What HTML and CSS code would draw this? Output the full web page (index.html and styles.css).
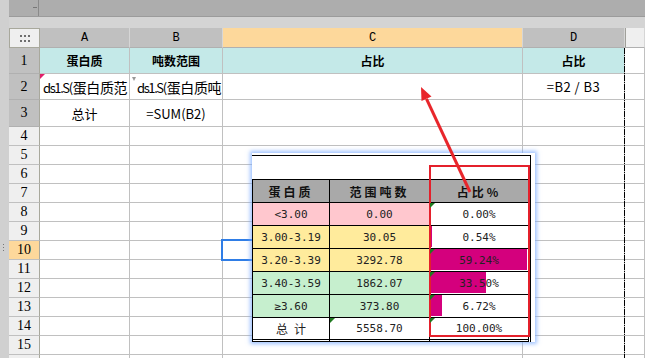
FILE: index.html
```html
<!DOCTYPE html>
<html lang="zh">
<head>
  <meta charset="UTF-8">
  <title>蛋白质占比报表</title>
  <link rel="stylesheet" href="styles.css">
</head>
<body>
  <div class="app">
    <div class="strip">
      <svg class="grip" width="2" height="9" viewBox="0 0 2 9"><rect y="0" width="1" height="1"/><rect y="3" width="1" height="1"/><rect y="6" width="1" height="1"/></svg>
    </div>
    <div class="main">
      <div class="topbar"><div class="namebox"></div></div>
      <div class="toolstrip"></div>
      <div class="sheet">
        <div class="corner">
          <svg width="10" height="7" viewBox="0 0 10 7"><rect x="0" y="0" width="2" height="2"/><rect x="4" y="0" width="2" height="2"/><rect x="8" y="0" width="2" height="2"/><rect x="0" y="5" width="2" height="2"/><rect x="4" y="5" width="2" height="2"/><rect x="8" y="5" width="2" height="2"/></svg>
        </div>
        <div class="ch">A</div><div class="ch">B</div><div class="ch on">C</div><div class="ch">D</div><div class="ch blank"></div>

        <div class="rn dark">1</div><div class="title">蛋白质</div><div class="title">吨数范围</div><div class="title">占比</div><div class="title">占比</div><div></div>
        <div class="rn dark">2</div>
        <div class="wrap flag"><span class="lat">ds1.S(</span>蛋白质范围)</div>
        <div class="wrap mark"><span class="lat">ds1.S(</span>蛋白质吨数)</div>
        <div></div><div class="formula">=B2 / B3</div><div></div>
        <div class="rn dark">3</div><div class="plain">总计</div><div class="plain">=SUM(B2)</div><div></div><div></div><div></div>

        <div class="rn">4</div><div></div><div></div><div></div><div></div><div></div>
        <div class="rn">5</div><div></div><div></div><div></div><div></div><div></div>
        <div class="rn">6</div><div></div><div></div><div></div><div></div><div></div>
        <div class="rn">7</div><div></div><div></div><div></div><div></div><div></div>
        <div class="rn">8</div><div></div><div></div><div></div><div></div><div></div>
        <div class="rn">9</div><div></div><div></div><div></div><div></div><div></div>
        <div class="rn on">10</div><div></div><div></div><div></div><div></div><div></div>
        <div class="rn">11</div><div></div><div></div><div></div><div></div><div></div>
        <div class="rn">12</div><div></div><div></div><div></div><div></div><div></div>
        <div class="rn">13</div><div></div><div></div><div></div><div></div><div></div>
        <div class="rn">14</div><div></div><div></div><div></div><div></div><div></div>
        <div class="rn">15</div><div></div><div></div><div></div><div></div><div></div>
        <div class="rn">16</div><div></div><div></div><div></div><div></div><div></div>
      </div>
    </div>

    <div class="pagebreak"></div>
    <div class="select"></div>

    <div class="float">
      <div class="frame">
        <div class="report">
          <div class="th">蛋白质</div><div class="th">范围吨数</div><div class="th">占比%</div>

          <div class="pink">&lt;3.00</div><div class="pink">0.00</div>
          <div class="pct tri"><span>0.00%</span></div>

          <div class="yellow">3.00-3.19</div><div class="yellow">30.05</div>
          <div class="pct"><i class="bar" style="width:1px"></i><span>0.54%</span></div>

          <div class="yellow">3.20-3.39</div><div class="yellow">3292.78</div>
          <div class="pct tri"><i class="bar" style="width:96px"></i><span>59.24%</span></div>

          <div class="green">3.40-3.59</div><div class="green">1862.07</div>
          <div class="pct tri"><i class="bar" style="width:55px"></i><span>33.50%</span></div>

          <div class="green">≥3.60</div><div class="green">373.80</div>
          <div class="pct tri"><i class="bar" style="width:11px"></i><span>6.72%</span></div>

          <div class="total sum">总计</div><div class="total tri">5558.70</div>
          <div class="total pct tri"><span>100.00%</span></div>
        </div>
      </div>
      <div class="redbox"></div>
    </div>

    <svg class="arrow" width="645" height="358" viewBox="0 0 645 358">
      <line x1="470" y1="192" x2="426.5" y2="98.8" stroke="#e8262b" stroke-width="3"/>
      <polygon points="421,87 431.5,96.5 421.5,101.1" fill="#e8262b"/>
    </svg>
  </div>
</body>
</html>
```

FILE: styles.css
```css
body {
  margin: 0;
  width: 645px; height: 358px;
  overflow: hidden;
  background: #fff;
  font-family: "Noto Sans CJK SC", sans-serif;
  color: #000;
}
.app { position: relative; display: flex; height: 358px; overflow: hidden; }

/* left gutter */
.strip {
  width: 9px; flex: none;
  background: #d0d0d0;
  display: flex; flex-direction: column; align-items: center;
  padding-top: 244px; box-sizing: border-box;
}
.grip { fill: #777; margin-left: -1px; }

.main { flex: 1; display: flex; flex-direction: column; min-width: 0; }
.topbar {
  flex: none;
  height: 17px; box-sizing: border-box;
  background: #adadad; border-bottom: 1px solid #9b9b9b;
  display: flex;
}
.namebox {
  width: 30px; box-sizing: border-box;
  border-right: 1px solid #8a8a8a;
  position: relative;
}
.namebox::after {
  content: ""; position: absolute;
  right: 1px; top: 7px; width: 4px; height: 1px; background: #777;
}
.toolstrip { flex: none; height: 11px; background: #d4d4d4; }

/* grid */
.sheet {
  flex: none;
  display: grid;
  grid-template-columns: 31px 90px 93px 300px 102px 1fr;
  grid-template-rows: 20px 26px 26px 27px;
  grid-auto-rows: 19px;
}
.sheet > div {
  box-sizing: border-box;
  border-right: 1px solid #c0c0c0;
  border-bottom: 1px solid #c0c0c0;
  display: flex; align-items: center; justify-content: center;
  overflow: hidden;
  font-size: 13px;
  position: relative;
}
.sheet > .corner {
  background: #efefef;
  border: 1px solid #a8a89c;
}
.corner svg { fill: #6e6e6e; margin-left: 1px; }
.sheet > .ch {
  background: #c0c0c0;
  border-right-color: #d6d6d6;
  border-bottom-color: #b0b0b0;
  font-family: "Liberation Mono", monospace;
  font-size: 12px;
}
.sheet > .ch.on { background: #fdd89b; }
.sheet > .ch.blank { background: #efefef; border-left: 1px solid #a0a09a; }
.sheet > .rn {
  background: #efefef;
  border-right-color: #a8a89c;
  font-family: "Liberation Serif", serif;
  font-size: 14px;
}
.sheet > .rn.dark { background: #c0c0c0; border-bottom-color: #b0b0b0; }
.sheet > .rn.on { background: #fdd89b; }
.sheet > .title { background: #c4e9e8; font-weight: 700; font-size: 12px; }
.sheet > .plain { font-size: 13px; }
.sheet > .formula { font-size: 13px; letter-spacing: 0.5px; }
.sheet > .wrap {
  display: block;
  font-size: 14px; line-height: 18px;
  letter-spacing: -0.4px;
  padding: 4px 0 0 3px;
  word-break: break-all;
}
.sheet > .wrap.mark { padding-left: 7px; }
.lat { font-size: 13px; letter-spacing: -1.4px; margin-right: 1px; }
.flag::before {
  content: ""; position: absolute; left: 0; top: 0;
  border-top: 5px solid #e0206a; border-right: 5px solid transparent;
}
.mark::before {
  content: ""; position: absolute; left: 2px; top: 3px;
  border-top: 4px solid #999; border-left: 2px solid transparent; border-right: 2px solid transparent;
}

/* overlays */
.pagebreak {
  position: absolute; left: 624px; top: 48px; bottom: 0; width: 1px;
  background: repeating-linear-gradient(#000 0 6px, #bbb 6px 7px, #000 7px 8px, #bbb 8px 9px);
}
.select {
  position: absolute; left: 221px; top: 239px;
  width: 40px; height: 22px; box-sizing: border-box;
  border: 2px solid #2f7de6;
}

.float {
  position: absolute; left: 252px; top: 153px;
  width: 283px; height: 189px;
  box-sizing: border-box; padding: 2px 4px 0 0;
  background: #fff;
  box-shadow: 0 0 4px 2px rgba(120, 170, 255, 0.7);
}
.frame {
  height: 100%; box-sizing: border-box;
  border-top: 1px solid #000; border-right: 1px solid #000;
  padding-top: 23px;
}
.report {
  display: grid;
  grid-template-columns: 78px 100px 99px;
  grid-template-rows: 24px repeat(5, 23px) 24px;
  width: 277px;
  font-family: "DejaVu Sans Mono", monospace;
  font-size: 11px;
  color: #222;
}
.report > div {
  box-sizing: border-box;
  border-right: 1px solid #000;
  border-bottom: 1px solid #000;
  display: flex; align-items: center; justify-content: center;
  position: relative;
}
.report > div:nth-child(3n+1) { border-left: 1px solid #000; }
.report > .th {
  background: #a9a9a9; border-top: 1px solid #000;
  font-family: "Noto Sans CJK SC", sans-serif;
  font-weight: 700; font-size: 12px; letter-spacing: 3px;
  color: #111;
}
.pink { background: #ffc7ce; }
.yellow { background: #ffeb9c; }
.green { background: #c6efce; }
.report > .total { border-bottom: 3px double #000; }
.sum { font-family: "Noto Sans CJK SC", sans-serif; font-size: 12px; letter-spacing: 6px; padding-left: 6px; }
.pct span { position: relative; }
.bar {
  position: absolute; left: 1px; top: 0; bottom: 1px;
  background: #d4007d;
}
.tri::before {
  content: ""; position: absolute; left: 0; top: 0; z-index: 1;
  border-top: 5px solid #1f7a1f; border-right: 5px solid transparent;
}
.redbox {
  position: absolute; left: 177px; top: 12px;
  width: 101px; height: 172px; box-sizing: border-box;
  border: 2px solid #e4202b;
}
.arrow { position: absolute; left: 0; top: 0; pointer-events: none; }
```
